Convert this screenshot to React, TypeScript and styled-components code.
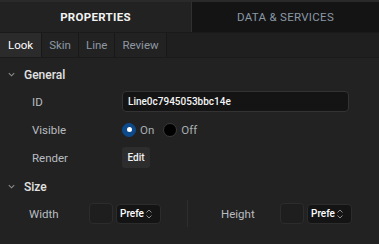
import React from "react";
import styled, { createGlobalStyle } from "styled-components";

const GlobalStyle = createGlobalStyle`
  html, body {
    margin: 0;
    padding: 0;
    background: #222222;
    font-family: Roboto, "Liberation Sans", sans-serif;
  }
`;

const Panel = styled.div`
  width: 379px;
  height: 244px;
  background: #222222;
  overflow: hidden;
  display: flex;
  flex-direction: column;
`;

const TopStrip = styled.div`
  height: 2px;
  background: #2a2a2a;
`;

const MainTabs = styled.div`
  display: flex;
  height: 30px;
`;

const MainTab = styled.div<{ $active?: boolean }>`
  flex: ${(p) => (p.$active ? "0 0 191px" : "1")};
  display: flex;
  align-items: center;
  justify-content: center;
  background: ${(p) => (p.$active ? "#222222" : "#141414")};
  color: ${(p) => (p.$active ? "#f2f2f2" : "#8a98a6")};
  font-size: 11.5px;
  font-weight: ${(p) => (p.$active ? 700 : 400)};
  letter-spacing: 0.3px;
  border-left: ${(p) => (p.$active ? "none" : "1px solid #303030")};
`;

const SubTabs = styled.div`
  display: flex;
  height: 24px;
  background: #1f1f1f;
  border-top: 1px solid #1a1a1a;
  border-bottom: 1px solid #1a1a1a;
`;

const SubTab = styled.div<{ $active?: boolean }>`
  padding: 0 ${(p) => (p.$active ? "8px" : "7px")};
  display: flex;
  align-items: center;
  font-size: 11.5px;
  background: ${(p) => (p.$active ? "#2b2b2b" : "#222222")};
  color: ${(p) => (p.$active ? "#ffffff" : "#8d98a3")};
  border-right: 1px solid #181818;
`;

const Body = styled.div`
  display: flex;
  flex-direction: column;
  padding-top: 7px;
`;

const SectionHeader = styled.div`
  display: flex;
  align-items: center;
  height: 19px;
  padding-left: 7px;
  gap: 8px;
  color: #e2e2e2;
  font-size: 12px;
  font-weight: 500;
`;

const Rows = styled.div`
  display: flex;
  flex-direction: column;
  padding: 7px 0 9px;
  gap: 7px;
`;

const Row = styled.div`
  display: grid;
  grid-template-columns: 90px 1fr;
  align-items: center;
  height: 21px;
  padding-left: 32px;
`;

const Label = styled.span`
  color: #b8bcc0;
  font-size: 11.5px;
`;

const TextInput = styled.div`
  width: 220px;
  height: 19px;
  background: #141414;
  border: 1px solid #333333;
  border-radius: 4px;
  display: flex;
  align-items: center;
  padding-left: 5px;
  color: #f4f4f4;
  font-size: 10px;
  font-weight: 500;
`;

const Radios = styled.div`
  display: flex;
  align-items: center;
  gap: 4px;
`;

const Radio = styled.span<{ $on?: boolean }>`
  width: 14px;
  height: 14px;
  border-radius: 50%;
  box-sizing: border-box;
  background: ${(p) => (p.$on ? "#0c4a8c" : "#000000")};
  border: 1px solid ${(p) => (p.$on ? "#0c4a8c" : "#3a3a3a")};
  display: flex;
  align-items: center;
  justify-content: center;
  &::after {
    content: "";
    display: ${(p) => (p.$on ? "block" : "none")};
    width: 5px;
    height: 5px;
    border-radius: 50%;
    background: #ffffff;
  }
`;

const RadioText = styled.span`
  color: #a8adb2;
  font-size: 11.5px;
  margin-right: 5px;
`;

const Button = styled.div`
  width: 28px;
  height: 21px;
  background: #2d2d2d;
  border-radius: 3px;
  display: flex;
  align-items: center;
  justify-content: center;
  color: #f2f2f2;
  font-size: 10px;
  font-weight: 500;
`;

const SizeRow = styled.div`
  display: flex;
  align-items: center;
  height: 27px;
  margin-top: 4px;
`;

const SizeHalf = styled.div<{ $pad: number; $w: number }>`
  display: grid;
  grid-template-columns: ${(p) => p.$w}px auto auto;
  align-items: center;
  gap: 3px;
  padding-left: ${(p) => p.$pad}px;
`;

const Divider = styled.div`
  width: 1px;
  height: 27px;
  background: #2e2e2e;
  margin: 0 33px 0 26px;
`;

const NumBox = styled.div`
  width: 22px;
  height: 19px;
  border: 1px solid #2c2c2c;
  border-radius: 4px;
  background: #1e1e1e;
`;

const Select = styled.div`
  width: 45px;
  height: 20px;
  box-sizing: border-box;
  border: 1px solid #2c2c2c;
  border-radius: 4px;
  background: #141414;
  display: flex;
  align-items: center;
  padding-left: 3px;
  gap: 1px;
  color: #ffffff;
  font-size: 10px;
  font-weight: 500;
`;

const Chevron = () => (
  <svg width="9" height="9" viewBox="0 0 10 10">
    <path d="M2 3.5 L5 6.5 L8 3.5" fill="none" stroke="#8c8c8c" strokeWidth="1.2" />
  </svg>
);

const UpDown = () => (
  <svg width="8" height="12" viewBox="0 0 8 12">
    <path d="M1.5 4.5 L4 2 L6.5 4.5 M1.5 7.5 L4 10 L6.5 7.5" fill="none" stroke="#8a8a8a" strokeWidth="1" />
  </svg>
);

export default function App() {
  return (
    <Panel>
      <GlobalStyle />
      <TopStrip />
      <MainTabs>
        <MainTab $active>PROPERTIES</MainTab>
        <MainTab>DATA &amp; SERVICES</MainTab>
      </MainTabs>
      <SubTabs>
        <SubTab $active>Look</SubTab>
        <SubTab>Skin</SubTab>
        <SubTab>Line</SubTab>
        <SubTab>Review</SubTab>
      </SubTabs>
      <Body>
        <SectionHeader>
          <Chevron />
          General
        </SectionHeader>
        <Rows>
          <Row>
            <Label>ID</Label>
            <TextInput>Line0c7945053bbc14e</TextInput>
          </Row>
          <Row>
            <Label>Visible</Label>
            <Radios>
              <Radio $on />
              <RadioText>On</RadioText>
              <Radio />
              <RadioText>Off</RadioText>
            </Radios>
          </Row>
          <Row>
            <Label>Render</Label>
            <Button>Edit</Button>
          </Row>
        </Rows>
        <SectionHeader>
          <Chevron />
          Size
        </SectionHeader>
        <SizeRow>
          <SizeHalf $pad={29} $w={57}>
            <Label>Width</Label>
            <NumBox />
            <Select>
              Prefe
              <UpDown />
            </Select>
          </SizeHalf>
          <Divider />
          <SizeHalf $pad={0} $w={56}>
            <Label>Height</Label>
            <NumBox />
            <Select>
              Prefe
              <UpDown />
            </Select>
          </SizeHalf>
        </SizeRow>
      </Body>
    </Panel>
  );
}
